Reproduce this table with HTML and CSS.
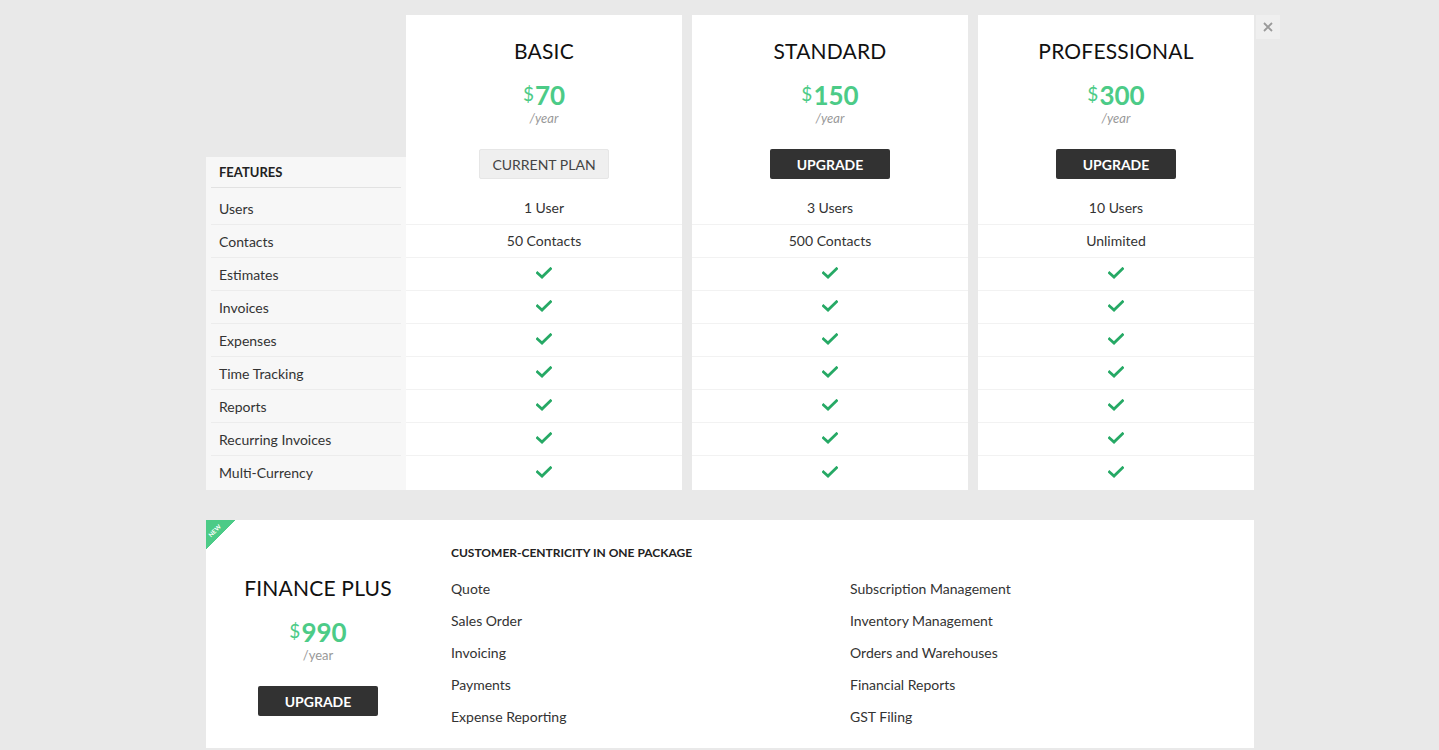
FILE: index.html
```html
<!DOCTYPE html>
<html>
<head>
<meta charset="utf-8">
<link rel="stylesheet" href="styles.css">
</head>
<body>
<div class="page">
  <div class="plans">
    <div class="features">
      <div class="features-head">FEATURES</div>
      <div class="frow">Users</div>
      <div class="frow">Contacts</div>
      <div class="frow">Estimates</div>
      <div class="frow">Invoices</div>
      <div class="frow">Expenses</div>
      <div class="frow">Time Tracking</div>
      <div class="frow">Reports</div>
      <div class="frow">Recurring Invoices</div>
      <div class="frow">Multi-Currency</div>
    </div>

    <div class="plan">
      <div class="plan-top">
        <div class="plan-name">BASIC</div>
        <div class="price"><span class="cur">$</span><span class="amt">70</span></div>
        <div class="per">/year</div>
        <button class="btn btn-current">CURRENT PLAN</button>
      </div>
      <div class="prow">1 User</div>
      <div class="prow">50 Contacts</div>
      <div class="prow"><svg class="check" viewBox="0 0 16 12"><polyline points="1.5,6 6,10 14.5,1.8"/></svg></div>
      <div class="prow"><svg class="check" viewBox="0 0 16 12"><polyline points="1.5,6 6,10 14.5,1.8"/></svg></div>
      <div class="prow"><svg class="check" viewBox="0 0 16 12"><polyline points="1.5,6 6,10 14.5,1.8"/></svg></div>
      <div class="prow"><svg class="check" viewBox="0 0 16 12"><polyline points="1.5,6 6,10 14.5,1.8"/></svg></div>
      <div class="prow"><svg class="check" viewBox="0 0 16 12"><polyline points="1.5,6 6,10 14.5,1.8"/></svg></div>
      <div class="prow"><svg class="check" viewBox="0 0 16 12"><polyline points="1.5,6 6,10 14.5,1.8"/></svg></div>
      <div class="prow"><svg class="check" viewBox="0 0 16 12"><polyline points="1.5,6 6,10 14.5,1.8"/></svg></div>
    </div>

    <div class="plan">
      <div class="plan-top">
        <div class="plan-name">STANDARD</div>
        <div class="price"><span class="cur">$</span><span class="amt">150</span></div>
        <div class="per">/year</div>
        <button class="btn btn-dark">UPGRADE</button>
      </div>
      <div class="prow">3 Users</div>
      <div class="prow">500 Contacts</div>
      <div class="prow"><svg class="check" viewBox="0 0 16 12"><polyline points="1.5,6 6,10 14.5,1.8"/></svg></div>
      <div class="prow"><svg class="check" viewBox="0 0 16 12"><polyline points="1.5,6 6,10 14.5,1.8"/></svg></div>
      <div class="prow"><svg class="check" viewBox="0 0 16 12"><polyline points="1.5,6 6,10 14.5,1.8"/></svg></div>
      <div class="prow"><svg class="check" viewBox="0 0 16 12"><polyline points="1.5,6 6,10 14.5,1.8"/></svg></div>
      <div class="prow"><svg class="check" viewBox="0 0 16 12"><polyline points="1.5,6 6,10 14.5,1.8"/></svg></div>
      <div class="prow"><svg class="check" viewBox="0 0 16 12"><polyline points="1.5,6 6,10 14.5,1.8"/></svg></div>
      <div class="prow"><svg class="check" viewBox="0 0 16 12"><polyline points="1.5,6 6,10 14.5,1.8"/></svg></div>
    </div>

    <div class="plan">
      <div class="plan-top">
        <div class="plan-name">PROFESSIONAL</div>
        <div class="price"><span class="cur">$</span><span class="amt">300</span></div>
        <div class="per">/year</div>
        <button class="btn btn-dark">UPGRADE</button>
      </div>
      <div class="prow">10 Users</div>
      <div class="prow">Unlimited</div>
      <div class="prow"><svg class="check" viewBox="0 0 16 12"><polyline points="1.5,6 6,10 14.5,1.8"/></svg></div>
      <div class="prow"><svg class="check" viewBox="0 0 16 12"><polyline points="1.5,6 6,10 14.5,1.8"/></svg></div>
      <div class="prow"><svg class="check" viewBox="0 0 16 12"><polyline points="1.5,6 6,10 14.5,1.8"/></svg></div>
      <div class="prow"><svg class="check" viewBox="0 0 16 12"><polyline points="1.5,6 6,10 14.5,1.8"/></svg></div>
      <div class="prow"><svg class="check" viewBox="0 0 16 12"><polyline points="1.5,6 6,10 14.5,1.8"/></svg></div>
      <div class="prow"><svg class="check" viewBox="0 0 16 12"><polyline points="1.5,6 6,10 14.5,1.8"/></svg></div>
      <div class="prow"><svg class="check" viewBox="0 0 16 12"><polyline points="1.5,6 6,10 14.5,1.8"/></svg></div>
    </div>

    <button class="close" aria-label="Close"><svg viewBox="0 0 10 10"><path d="M1 1L9 9M9 1L1 9"/></svg></button>
  </div>

  <div class="finance">
    <div class="ribbon"><span>NEW</span></div>
    <div class="fin-left">
      <div class="plan-name">FINANCE PLUS</div>
      <div class="price"><span class="cur">$</span><span class="amt">990</span></div>
      <div class="per per-upright">/year</div>
      <button class="btn btn-dark">UPGRADE</button>
    </div>
    <div class="fin-right">
      <div class="fin-head">CUSTOMER-CENTRICITY IN ONE PACKAGE</div>
      <ul class="fin-list">
        <li>Quote</li>
        <li>Sales Order</li>
        <li>Invoicing</li>
        <li>Payments</li>
        <li>Expense Reporting</li>
        <li>Subscription Management</li>
        <li>Inventory Management</li>
        <li>Orders and Warehouses</li>
        <li>Financial Reports</li>
        <li>GST Filing</li>
      </ul>
    </div>
  </div>
</div>
</body>
</html>
```

FILE: styles.css
```css
* { box-sizing: border-box; }

html, body {
  margin: 0;
  padding: 0;
  background: #e9e9e9;
  font-family: Lato, "Open Sans", "Liberation Sans", sans-serif;
  color: #333;
}

.page {
  margin-left: 206px;
  padding-top: 15px;
  width: 1080px;
}

.plans {
  display: flex;
  align-items: flex-start;
}

/* features column */
.features {
  width: 200px;
  margin-top: 142px;
  background: #f7f7f7;
  padding: 0 5px 1px;
}

.features-head {
  height: 31px;
  line-height: 30px;
  padding-left: 8px;
  font-size: 13px;
  font-weight: 700;
  color: #222;
  border-bottom: 1px solid #e2e2e2;
  margin-bottom: 4px;
}

.frow {
  height: 33px;
  line-height: 33px;
  padding-left: 8px;
  font-size: 14px;
  color: #333;
  border-bottom: 1px solid #ececec;
}

.frow:last-child { border-bottom: none; }

/* plan columns */
.plan {
  width: 276px;
  background: #fff;
  padding-bottom: 1px;
  text-align: center;
}

.plan + .plan { margin-left: 10px; }

.plan-top {
  height: 177px;
  padding-top: 22px;
  display: flex;
  flex-direction: column;
  align-items: center;
}

.plan-name {
  font-size: 21px;
  line-height: 28px;
  color: #111;
  letter-spacing: 0.2px;
}

.price {
  margin-top: 15px;
  padding-top: 2px;
  line-height: 30px;
  height: 30px;
  color: #4ccb87;
  display: flex;
  align-items: baseline;
  justify-content: center;
}

.price .cur {
  font-size: 19px;
  line-height: 1;
  position: relative;
  top: -4px;
  margin-right: 1px;
}

.price .amt {
  font-size: 26px;
  line-height: 1;
  font-weight: 700;
}

.per {
  font-size: 13px;
  line-height: 16px;
  height: 16px;
  color: #999;
  font-style: italic;
}

.per-upright { font-style: normal; }

.btn {
  margin-top: 23px;
  height: 30px;
  font-family: inherit;
  font-size: 14px;
  padding: 0;
  border-radius: 2px;
  cursor: pointer;
}

.btn-current {
  width: 130px;
  background: #efefef;
  border: 1px solid #e6e6e6;
  color: #444;
}

.btn-dark {
  width: 120px;
  background: #323232;
  border: none;
  color: #fff;
  font-weight: 700;
}

.prow {
  height: 33px;
  line-height: 32px;
  font-size: 14px;
  color: #333;
  border-bottom: 1px solid #f2f2f2;
  display: flex;
  align-items: center;
  justify-content: center;
}

.prow:last-child { border-bottom: none; }

.check {
  width: 16px;
  height: 12px;
  margin-top: -2px;
  fill: none;
  stroke: #26a965;
  stroke-width: 2.8;
  stroke-linecap: square;
}

.close {
  margin-left: 2px;
  width: 24px;
  height: 24px;
  padding: 0;
  background: #efefef;
  border: none;
  display: flex;
  align-items: center;
  justify-content: center;
  cursor: pointer;
}

.close svg {
  width: 10px;
  height: 10px;
  stroke: #9a9a9a;
  stroke-width: 1.8;
}

/* finance plus */
.finance {
  position: relative;
  margin-top: 30px;
  width: 1048px;
  height: 228px;
  background: #fff;
  display: flex;
  overflow: hidden;
}

.ribbon {
  position: absolute;
  left: 0;
  top: 0;
  width: 30px;
  height: 30px;
  background: linear-gradient(135deg, #4ccb87 50%, transparent 50%);
}

.ribbon span {
  position: absolute;
  left: 1px;
  top: 7px;
  font-size: 6px;
  font-weight: 700;
  color: #fff;
  transform: rotate(-45deg);
  letter-spacing: 0.2px;
}

.fin-left {
  width: 224px;
  padding-top: 54px;
  display: flex;
  flex-direction: column;
  align-items: center;
  text-align: center;
}

.fin-left .price { margin-top: 15px; }

.fin-right {
  padding-left: 21px;
  padding-top: 23px;
  flex: 1;
}

.fin-head {
  font-size: 12px;
  line-height: 20px;
  font-weight: 700;
  color: #222;
}

.fin-list {
  list-style: none;
  margin: 10px 0 0;
  padding: 0;
  display: grid;
  grid-template-columns: 399px 1fr;
  grid-template-rows: repeat(5, 32px);
  grid-auto-flow: column;
}

.fin-list li {
  font-size: 14px;
  line-height: 32px;
  color: #333;
}
```
